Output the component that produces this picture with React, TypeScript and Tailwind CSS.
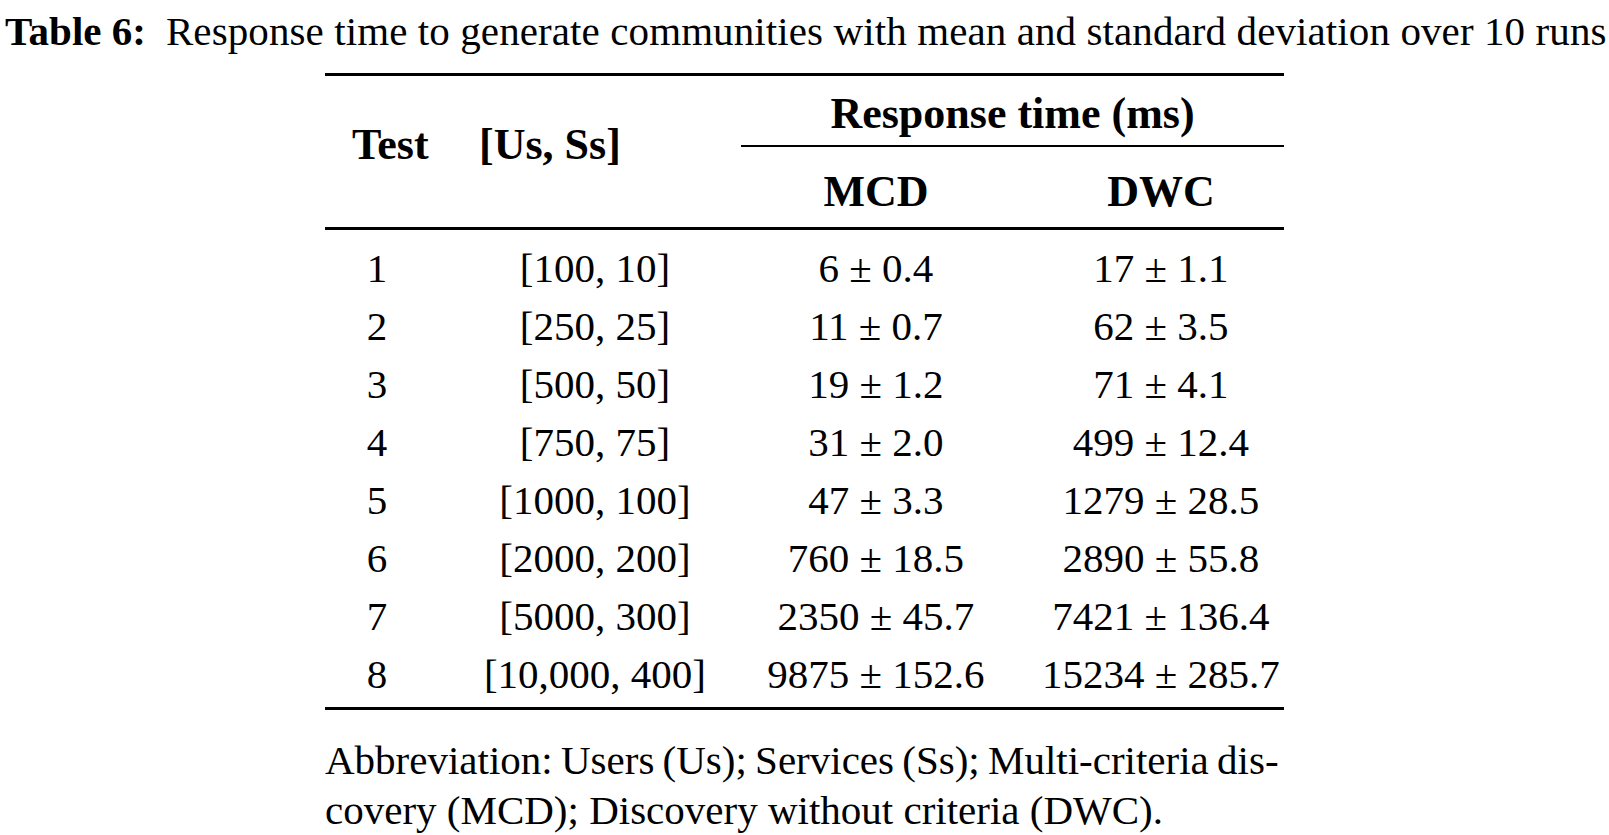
const rows: [string, string, string, string][] = [
  ["1", "[100, 10]", "6 ± 0.4", "17 ± 1.1"],
  ["2", "[250, 25]", "11 ± 0.7", "62 ± 3.5"],
  ["3", "[500, 50]", "19 ± 1.2", "71 ± 4.1"],
  ["4", "[750, 75]", "31 ± 2.0", "499 ± 12.4"],
  ["5", "[1000, 100]", "47 ± 3.3", "1279 ± 28.5"],
  ["6", "[2000, 200]", "760 ± 18.5", "2890 ± 55.8"],
  ["7", "[5000, 300]", "2350 ± 45.7", "7421 ± 136.4"],
  ["8", "[10,000, 400]", "9875 ± 152.6", "15234 ± 285.7"],
];

export default function App() {
  return (
    <div className="w-[1609px] h-[835px] overflow-hidden bg-white text-black font-['Liberation_Serif',serif]">
      <div className="pl-[5px] pt-[8px] text-[41px] leading-[46px] whitespace-nowrap">
        <span className="font-bold">Table 6:</span>
        <span className="ml-[20px] tracking-[0.1px]">
          Response time to generate communities with mean and standard deviation over 10 runs
        </span>
      </div>

      <div className="ml-[325px] mt-[19px] w-[959px] text-[41px] leading-[58px]">
        {/* header */}
        <div className="grid grid-cols-[104px_312px_270px_273px] border-t-[3px] border-b-[3px] border-black font-bold text-[44px]">
          <div className="row-span-2 pl-[27px] pt-[40px]">Test</div>
          <div className="row-span-2 pl-[50px] pt-[40px] whitespace-nowrap">[Us, Ss]</div>
          <div className="col-span-2 pt-[9px] pb-[2px] border-b-2 border-black text-center whitespace-nowrap">
            Response time (ms)
          </div>
          <div className="pt-[16px] pb-[6px] text-center">MCD</div>
          <div className="pt-[16px] pb-[6px] pl-[27px] text-center">DWC</div>
        </div>

        {/* body */}
        <div className="pt-[9px] pb-[4px] border-b-[3px] border-black">
          {rows.map((r) => (
            <div key={r[0]} className="grid grid-cols-[104px_312px_270px_273px]">
              <div className="text-center">{r[0]}</div>
              <div className="pl-[20px] text-center whitespace-nowrap">{r[1]}</div>
              <div className="text-center whitespace-nowrap">{r[2]}</div>
              <div className="pl-[27px] text-center whitespace-nowrap">{r[3]}</div>
            </div>
          ))}
        </div>

        {/* note */}
        <div className="mt-[25px] text-[41px] leading-[50px]">
          <div className="whitespace-nowrap [word-spacing:-2px]">
            Abbreviation: Users (Us); Services (Ss); Multi-criteria dis-
          </div>
          <div className="whitespace-nowrap">covery (MCD); Discovery without criteria (DWC).</div>
        </div>
      </div>
    </div>
  );
}
